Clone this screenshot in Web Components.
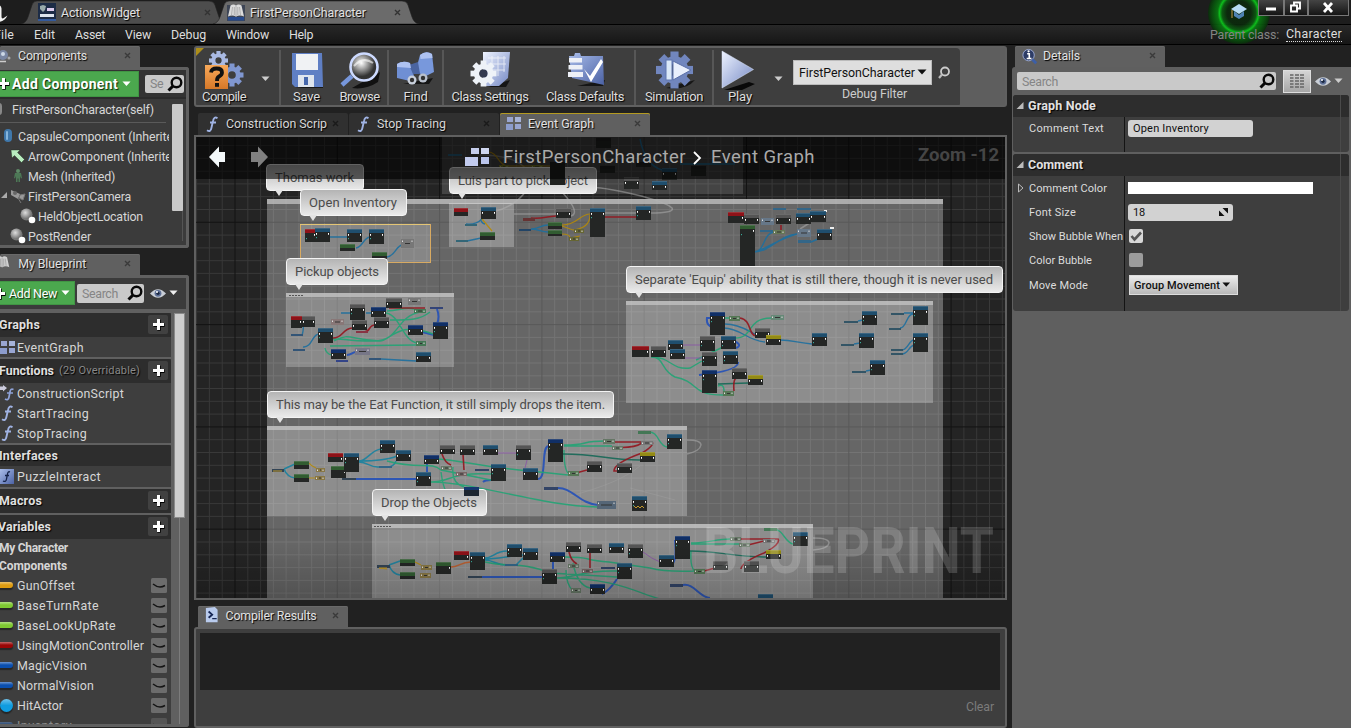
<!DOCTYPE html>
<html lang="en">
<head>
<meta charset="utf-8">
<title>Blueprint Editor</title>
<style>
html,body{margin:0;height:100%;overflow:hidden;background:#212121}
body{font:12.4px Roboto,"Liberation Sans",sans-serif;color:#dcdcdc}
</style>
</head>
<body>
<blueprint-editor></blueprint-editor>
<script>
const define=(name,css,html,extra)=>customElements.define(name,class extends HTMLElement{
  constructor(){super();this.attachShadow({mode:'open'});}
  connectedCallback(){
    if(this.ready)return;this.ready=true;
    this.shadowRoot.innerHTML='<style>*{box-sizing:border-box}'+css+'</style>'+(typeof html==='function'?html(this):html);
    if(extra)extra(this);
  }
});
const t=(text,w,style='')=>`<ue-label fit="${w}" style="${style}">${text}</ue-label>`;

/* Text run set to a given width by tracking */
define('ue-label',':host{display:inline-block;white-space:nowrap;flex:none}','<slot></slot>',el=>{
  const fit=+el.getAttribute('fit');
  if(fit){const n=el.textContent.length,w=el.getBoundingClientRect().width;
    el.style.letterSpacing=((fit-w)/n).toFixed(3)+'px';}
});

const gear=(cx,cy,r,fill,teeth=8)=>{let s='';for(let i=0;i<teeth;i++)s+=`<rect x="${cx-r*.22}" y="${cy-r}" width="${r*.44}" height="${r*.6}" fill="${fill}" transform="rotate(${i*360/teeth} ${cx} ${cy})"/>`;
  return s+`<circle cx="${cx}" cy="${cy}" r="${r*.54}" fill="none" stroke="${fill}" stroke-width="${r*.42}"/>`;};
const defs=`<defs><linearGradient id="b" x2="1" y2="1"><stop stop-color="#eef3ff"/><stop offset="1" stop-color="#7488c4"/></linearGradient><linearGradient id="c" x2="1" y2="1"><stop stop-color="#a9bdea"/><stop offset="1" stop-color="#4c62a4"/></linearGradient><radialGradient id="s" cx=".4" cy=".35"><stop stop-color="#fff"/><stop offset=".5" stop-color="#999"/><stop offset="1" stop-color="#333"/></radialGradient><linearGradient id="o" y2="1" x2="0"><stop stop-color="#f8a95a"/><stop offset="1" stop-color="#d67828"/></linearGradient></defs>`;
const icons={
 u:[20,24,`<path d="M-6 4Q1 4 1.500 8.500V16.500Q1.500 20 4.500 17.500L7.500 15.500Q4 22.500-3 22V19Q-1 19-2 16V9z" fill="#f2f2f2"/>`],
 widget:[18,18,`<rect width="18" height="18" fill="#1d2c46"/><path d="M2 3l3-1 3 1-1 4-2 2-3-3z" fill="#9aa"/><rect x="9" y="5" width="7" height="3" fill="#dce"/><rect x="2" y="11" width="14" height="3" fill="#dde4ee"/><path d="M0 17h18" stroke="#345a9c" stroke-width="2"/>`],
 book:[18,18,`<path d="M0 2h18v16H0z" fill="#1e2b46" opacity=".6"/><path d="M1 14h16v3.500H1z" fill="#274a8c"/><path d="M3.500 2.500q3-2 5.500 0q2.500-2 5.500 0l2.500 11q-4-2-8 0q-4-2-8 0z" fill="#dcdcdc"/><path d="M9 3v11M5.500 4L4.500 12M7.300 4v8M12.500 4l1 8M10.800 4v8" stroke="#a5a5a5" stroke-width=".8"/>`],
 bookbare:[18,18,`<path d="M3.500 2.500q3-2 5.500 0q2.500-2 5.500 0l2.500 11q-4-2-8 0q-4-2-8 0z" fill="#d0d0d0"/><path d="M9 3v11M5.500 4L4.500 12M7.300 4v8M12.500 4l1 8M10.800 4v8" stroke="#999" stroke-width=".8"/>`],
 bulb:[12,14,`<circle cx="3" cy="6" r="5" fill="#7986a2"/><circle cx="3" cy="5" r="2" fill="#cdd8e6"/><path d="M0 12.500h6" stroke="#ccc" stroke-width="1.500"/><circle cx="9" cy="9" r="1.500" fill="#aaa"/>`],
 plus:[11,11,`<path d="M5.5 0v11M0 5.5h11" stroke="#000" stroke-width="3.4" transform="translate(.6 .8)"/><path d="M5.5 0v11M0 5.5h11" stroke="#fff" stroke-width="3"/>`],
 caret:[10,6,`<path d="M.5 .5h9L5 5.500z" fill="currentColor"/>`],
 search:[16,16,`<circle cx="9.5" cy="6.5" r="4.8" fill="none" stroke="#080808" stroke-width="2.4"/><path d="M6 10l-4.5 4.5" stroke="#080808" stroke-width="3"/>`],
 searchlt:[12,14,`<circle cx="7" cy="5.5" r="4" fill="none" stroke="#ccc" stroke-width="1.8"/><path d="M4 8.5L1 12" stroke="#bbb" stroke-width="2.2"/>`],
 close:[7,7,`<path d="M1 1l5 5M6 1L1 6" stroke="currentColor" stroke-width="1.4"/>`],
 self:[5,14,`<rect x="-8" y="1" width="10" height="12" rx="3" fill="#888"/>`],
 capsule:[10,16,`<rect x="1" y="1" width="8" height="13" rx="4" fill="#3f78ac"/><rect x="3" y="3" width="2" height="9" rx="1" fill="#85b5dc"/>`],
 arrow:[15,14,`<path d="M1 1h9L7.5 3.5l7 7-3 3-7-7L2 9z" fill="#b9eec0" stroke="#1a2a1a" stroke-width=".4"/>`],
 mesh:[12,14,`<circle cx="6" cy="2" r="2" fill="#5d8a66"/><path d="M3 4h6l1 5-1 .5L8 7v6H6.500V9.500h-1V13H4V7L3 9.500 2 9z" fill="#4d7856"/>`],
 camera:[16,14,`<path d="M1 1l9 4-2 5-7-4z" fill="#999"/><circle cx="5" cy="4" r="2" fill="#666"/><path d="M10 6l5-1-2 6-4-2zM8 9l3 5" fill="#999" stroke="#777"/>`],
 sphere:[16,16,`<circle cx="6.5" cy="6.5" r="6" fill="url(#s)"/><circle cx="6.5" cy="6.5" r="6" fill="#bbb" opacity=".5"/><circle cx="12" cy="12" r="3.3" fill="#fff"/>`],
 eye:[18,13,`<path d="M1 6.5Q9-2 17 6.5Q9 15 1 6.5z" fill="#c9ced6"/><circle cx="9" cy="6.300" r="3.400" fill="#5d6f96"/><circle cx="9" cy="6.300" r="1.600" fill="#1a2740"/><circle cx="8" cy="5" r="1" fill="#fff"/>`],
 graph:[16,13,`<rect x="1" y="0" width="6" height="5" fill="#99a5cf"/><rect x="9" y="0" width="6" height="5" fill="#a6b3d8"/><rect x="0" y="7" width="7" height="6" fill="#8c9ccc"/><rect x="9" y="7" width="6" height="5" fill="#99a6d2"/>`],
 func:[14,16,`<path d="M12.5 2.2Q9 0 8 5L6.4 12Q5.6 16.5 2 14.2M5 6.5h6" fill="none" stroke="#9fb2e2" stroke-width="1.9"/>`],
 cfunc:[16,16,`<path d="M0 1.500h3V0l4 3-4 3.500V5H0z" fill="#ccd"/><path d="M13.5 4.5Q10.5 3 10 7L9 12Q8.4 16 5 14M7 8h6" fill="none" stroke="#8fa3d8" stroke-width="1.7"/>`],
 iface:[14,16,`<path d="M0 0h14v15H0z" fill="url(#c)"/><path d="M10 3Q8 2 7.5 5L6.5 10Q6 13.5 3 12M5 6.5h4" fill="none" stroke="#142248" stroke-width="1.3"/>`],
 info:[18,18,`<circle cx="8" cy="7.5" r="6" fill="#2d3c66" stroke="#9cabd4"/><path d="M12 12l4 4" stroke="#3c5fa8" stroke-width="3"/><path d="M6.5 6h2.2v5M6 11h5" stroke="#fff" stroke-width="1.7" fill="none"/><circle cx="8" cy="3.5" r="1.2" fill="#fff"/>`],
 ps:[15,18,`<path d="M1 1l10-1 3 3v14H1z" fill="#b9cbed"/><path d="M4 5l4 3.5L4 12" fill="none" stroke="#162654" stroke-width="2"/><path d="M8 13h5" stroke="#162654" stroke-width="1.5"/>`],
 compile:[44,42,gear(16.5,10.5,9.5,'#a9b9e2')+gear(30,25,11.5,'#8097d0')+`<rect x="3" y="15" width="23" height="24" fill="url(#o)"/><path d="M9 22.500Q9.500 18.500 14.500 18.500Q20 18.500 20 22.500Q20 25 17 26.500Q15 27.500 15 31" fill="none" stroke="#111" stroke-width="3.800"/><rect x="13" y="33" width="4" height="3.800" fill="#111"/>`],
 save:[40,42,`<path d="M8 38h28v-4z" fill="#181818"/><path d="M5 3h30l1 34H8l-3-3z" fill="#5f7fc4"/><path d="M9 4h22v16H9z" fill="#f0f2f4"/><path d="M11 25h16v12H11z" fill="#dfe5ee"/><path d="M17 27h4v8h-4z" fill="#4768ac"/>`],
 browse:[44,42,`<path d="M14 38q14 2 26-6l2-10z" fill="#111"/><path d="M14 26L4 35" stroke="#7797dc" stroke-width="4.500"/><circle cx="26" cy="17" r="13.500" fill="url(#s)" stroke="#cddaff" stroke-width="2.600"/><path d="M16 16q9-10 19-3" stroke="#fff" stroke-width="2" fill="none" opacity=".6"/>`],
 find:[42,42,`<path d="M8 34h26l4-6z" fill="#151515"/><path d="M2 14q6-4 13-1l4 13-4 5-13-3z" fill="#6f8fd4"/><path d="M21 20L25 5q6-5 12-1l2 18-10 5z" fill="#7898dc"/><path d="M14 15l9-3 2 12h-7z" fill="#4a64a0"/><path d="M2 14q6-4 13-1l1 5-14-1zM25 5q6-5 12-1l.500 4-12 1z" fill="#aec2f2"/><circle cx="17" cy="30" r="4.500" fill="#c9d0dc"/><circle cx="28" cy="28" r="4.500" fill="#b9c0cc"/><circle cx="17" cy="30" r="2.200" fill="#333"/><circle cx="28" cy="28" r="2.200" fill="#333"/>`],
 settings:[44,42,`<path d="M20 37h18l4-7z" fill="#151515"/><path d="M15 2h27l-2 26-9 8H15z" fill="url(#b)"/><path d="M20 8h18M20 14h18M20 20h17M24 6v20M30 6v20M36 6v16" stroke="#fff" opacity=".65"/>`+gear(15.5,23.5,13,'#eef2f8')+`<circle cx="15.500" cy="23.500" r="4" fill="#333a50"/>`],
 defaults:[44,42,`<path d="M14 36h26l2-6z" fill="#151515"/><path d="M6 6h5l1-3h5l1 3h22l1 29-32-7z" fill="url(#c)"/><path d="M6 8h13v4.500H6zM5.500 15h14v4.500h-14zM5 22h15v5H5z" fill="#edf0f7"/><path d="M21 19l6 7L38 9l2 3-12 20z" fill="#fff"/>`],
 sim:[44,42,`<path d="M14 38q20 3 29-8z" fill="#171717"/>`+gear(22.5,20,18.5,'#7186be')+`<rect x="14" y="10" width="6" height="20" fill="#dbe8f8" stroke="#6077af"/><path d="M21 11l18 9-18 10z" fill="#e9effc" stroke="#5b70a8"/>`],
 play:[40,42,`<path d="M4 40h18l13-6-6-2z" fill="#090909"/><path d="M2 1l31.500 18.500L2 38z" fill="url(#b)" stroke="#dce6fb" stroke-width=".5"/>`],
 grid:[14,14,[0,3,6,9,12].map(y=>`<path d="M0 ${y+1}h3.500M5 ${y+1}h4M10 ${y+1}h4" stroke="#666" stroke-width="1.600"/>`).join('')],
 exp:[9,8,`<path d="M3.500 0H9v5.500zM0 2.500V8h5.500z" fill="#111"/>`],
 check:[14,14,`<path d="M2.500 7l3 3.500L12 3.500" fill="none" stroke="#555" stroke-width="2.600"/>`],
 lid:[16,15,`<rect width="16" height="15" rx="1.500" fill="#6c6c6c"/><path d="M2 6q6 5 12 1.500" fill="none" stroke="#151515" stroke-width="1.500"/>`],
 bigarrowL:[16,20,`<path d="M0 10L10-.5V5h6v10h-6v5.500z" fill="#f3f8fa"/>`],
 bigarrowR:[17,20,`<path d="M17 10L7-.5V5H0v10h7v5.500z" fill="#808080"/>`],
 biggraph:[25,18,`<rect x="6" y="0" width="8" height="6" fill="#c5cdeb"/><rect x="16" y="0" width="8" height="6" fill="#cfd6ef"/><rect x="0" y="9" width="13" height="9" fill="#c2cbee"/><rect x="16" y="9" width="8" height="7" fill="#bac5ec"/>`],
 hat:[16,16,`<path d="M0 5l8-5 8 5-8 5z" fill="#b7dcf4"/><path d="M3 7l5 4 5-4v5l-5 3-5-3z" fill="#4f83b4"/><path d="M1 6v8" stroke="#c59a4c"/>`],
 min:[24,15,`<path d="M7 9h10" stroke="#fff" stroke-width="3"/>`],
 max:[22,15,`<path d="M6 5.500h6v6H6zM9 5V2.500h6v6h-3" fill="none" stroke="#fff" stroke-width="1.900"/>`],
 x:[39,15,`<path d="M15 3l8 9M23 3l-8 9" stroke="#fff" stroke-width="2.700"/>`]
};
define('ue-icon',':host{display:block;flex:none}svg{display:block;overflow:visible}',el=>{
  const [w,h,b]=icons[el.getAttribute('name')],k=+el.getAttribute('scale')||1;
  return `<svg width="${w*k}" height="${h*k}" viewBox="0 0 ${w} ${h}">${defs}${b}</svg>`;
});
const ic=(n,s='',k=1)=>`<ue-icon name="${n}" scale="${k}" style="${s}"></ue-icon>`;

define('title-tab',`:host{display:block;height:23px;position:relative;flex:none}
 svg{display:block;position:absolute;inset:0;width:100%;height:100%}
 .row{position:relative;display:flex;align-items:center;height:22px;color:#e2e2e2;text-shadow:1px 1px 1px #000}
 .x{margin-left:auto;color:#333}`,
 el=>{const w=+el.getAttribute('w');return `<svg viewBox="0 0 ${w} 23"><path d="M0 23Q5 22 7 16L11 4Q12 0 16 0H${w-17}Q${w-12} 0 ${w-11} 4L${w-7} 16Q${w-5} 22 ${w} 23z" fill="${el.getAttribute('fill')}" stroke="#222" stroke-width=".6"/></svg><div class="row"><slot></slot><ue-icon class="x" name="close"></ue-icon></div>`;});

define('title-bar',`:host{display:flex;align-items:flex-end;height:25px;background:#1d1d1d;overflow:visible;position:relative;border-bottom:1px solid #000}
 .win{margin-left:auto;align-self:flex-start;display:flex;margin-right:2px;position:relative;z-index:4}
 .win ue-icon{border:1px solid #777;border-top:0;background:linear-gradient(#444,#151515);margin-left:0}
 .badge{position:absolute;left:1208px;top:-18px;width:62px;height:62px;border-radius:50%;background:radial-gradient(circle,#0b2a0c 0 12px,#0a5f10 17px,#0ccf1c 19.500px,#087a10 21.500px,#08500c 27px,#0a2c0b 31px);z-index:2;opacity:.9;clip-path:inset(18px 0 0 0)}
 .hat{position:absolute;left:1231px;top:4px;z-index:3}`,
 `${ic('u','align-self:center')}<title-tab w="205" fill="#4d4d4d" style="width:205px;margin-left:1px"><ue-icon name="widget" style="margin-left:17px"></ue-icon>${t('ActionsWidget',79,'margin-left:5px')}</title-tab>
 <title-tab w="206" fill="#6b6b6b" style="width:206px;margin-left:-13px"><ue-icon name="book" style="margin-left:14px"></ue-icon>${t('FirstPersonCharacter',116,'margin-left:5px')}</title-tab>
 <div class="badge"></div><ue-icon class="hat" name="hat"></ue-icon><div class="win">${ic('min')}${ic('max')}${ic('x')}</div>`,
 el=>{const tabs=el.shadowRoot.querySelectorAll('title-tab');
  tabs[0].shadowRoot.querySelector('.x').style.marginRight='15px';
  tabs[1].shadowRoot.querySelector('.x').style.marginRight='18px';});

define('menu-bar',`:host{display:flex;align-items:center;height:20px;box-sizing:border-box;gap:20px;background:linear-gradient(#282828,#161616);border-bottom:1px solid #000;color:#ddd}
 .p{margin-left:auto;margin-right:9px;display:flex;gap:7px;position:relative;z-index:4}`,
 t('File',20,'margin-left:-6px')+t('Edit',21)+t('Asset',30)+t('View',26)+t('Debug',35)+t('Window',43)+t('Help',24)+
 `<div class="p">${t('Parent class:',69,'color:#848484')}${t('Character',56,'border-bottom:1px dotted #ddd;line-height:14px')}</div>`);

define('dock-tab',`:host{display:flex;align-items:center;height:22px;flex:none;background:#606060;border-radius:2px 2px 0 0;color:#e2e2e2;text-shadow:1px 1px 1px #000;padding-right:9px;padding-bottom:3px;overflow:hidden;box-shadow:inset 0 1px 0 #696969;box-sizing:border-box}
 :host([dim]){background:#303030;box-shadow:none;color:#d6d6d6;padding-bottom:1px}
 :host([hot]){box-shadow:inset 0 1px 0 #b49a20;padding-bottom:1px}
 .x{margin-left:auto;color:#3a3a3a}:host([dim]) .x{color:#1a1a1a}`,
 '<slot></slot><ue-icon class="x" name="close"></ue-icon>');

define('search-box',':host{display:flex;align-items:center;background:#c9c9c9;border-radius:2px;height:18px;color:#858585;padding:0 1px 0 5px;flex:none;box-sizing:border-box}ue-icon{margin-left:auto}',
 '<slot></slot><ue-icon name="search"></ue-icon>');
define('green-button',':host{display:flex;align-items:center;flex:none;background:#4ba84e;border:1px solid #409544;border-left:0;color:#fff;text-shadow:1px 1px 1px #0b2a0c;box-sizing:border-box}','<slot></slot>');

define('tree-row',':host{display:flex;align-items:center;height:20px;box-sizing:border-box;overflow:hidden;color:#d6d6d6;flex:none}.i{display:flex;justify-content:center;flex:none}',
 el=>`<div class="i">${ic(el.getAttribute('icon'))}</div><slot></slot>`);
const tr=(icon,x,gap,text,w)=>`<tree-row icon="${icon}" style="padding-left:${x}px">${t(text,w,`margin-left:${gap}px`)}</tree-row>`;

define('components-panel',`:host{display:flex;flex-direction:column;height:202px;width:189px;overflow:hidden}
 .f{height:181px;background:#3b3b3b;border:solid #606060;border-width:3px 3px 3px 0;border-radius:0 3px 3px 0;display:flex;flex-direction:column;margin-top:-1px}
 .bar{height:32px;display:flex;align-items:center;gap:6px;background:#333;border-bottom:2px solid #2c2c2c}
 .l{display:flex;height:146px}.rows{width:169px;overflow:hidden}
 .sep{height:1px;background:#5a5a5a;margin:3px 3px 3px 0}
 .sb{width:11px;margin:5px 0 0 3px;border-right:1px solid #555;height:137px}.sb i{display:block;height:107px;background:#c9c9c9;width:11px;border-radius:1px}
 .cam{position:relative}.cam:before{content:"";position:absolute;left:1px;top:6px;border:solid transparent;border-right-color:#aaa;border-bottom-color:#aaa;z-index:1;border-width:3.500px}`,
 `<dock-tab style="width:140px">${ic('bulb')}${t('Components',69,'margin-left:6px')}</dock-tab>
 <div class="f"><div class="bar"><green-button style="width:139px;height:26px;font-size:14px;font-weight:700">${ic('plus','margin-left:-2px')}${t('Add Component',106,'margin-left:3px')}${ic('caret','margin-left:4px',.9)}</green-button><search-box style="width:39px">${t('Se',13)}</search-box></div>
 <div class="l"><div class="rows">${tr('self',0,7,'FirstPersonCharacter(self)',142)}<div class="sep"></div>${tr('capsule',3,5,'CapsuleComponent (Inherited)',166)}${tr('arrow',10,3,'ArrowComponent (Inherited)',155)}${tr('mesh',12,4,'Mesh (Inherited)',87)}<div class="cam">${tr('camera',10,2,'FirstPersonCamera',103)}</div>${tr('sphere',20,2,'HeldObjectLocation',105)}${tr('sphere',10,2,'PostRender',63)}</div><div class="sb"><i></i></div></div></div>`);

define('section-head',':host{display:flex;align-items:center;height:24px;padding-bottom:1px;box-sizing:border-box;background:#2d2d2d;font-weight:700;color:#e0e0e0;text-shadow:1px 1px 1px #000;width:171px;border-radius:0 2px 0 0;flex:none}.p{margin-left:auto;width:20px;height:19px;background:#414141;display:grid;place-items:center;margin-right:3px;border-radius:2px}',
 el=>`<slot></slot>${el.hasAttribute('plain')?'':`<div class="p">${ic('plus')}</div>`}`);

define('variable-row',':host{display:flex;align-items:center;height:20px;box-sizing:border-box;color:#d6d6d6;width:171px;flex:none}.pill{width:16px;height:6px;margin-left:-3px;border-radius:3px;background:linear-gradient(#fff6,#0000 50%),var(--c);box-shadow:0 2px 1px #1118;flex:none}:host([ball]) .pill{width:13px;height:13px;margin-left:0;border-radius:50%}ue-icon{margin-left:auto;margin-right:4px}slot{display:block;margin-left:4px}',
 el=>`<div class="pill" style="--c:${el.getAttribute('c')}"></div><slot></slot>${ic('lid')}`);
const vr=(c,n,w,a='')=>`<variable-row c="${c}" ${a}>${t(n,w)}</variable-row>`;

define('blueprint-panel',`:host{display:flex;flex-direction:column;width:189px;margin-top:6px;flex:1;min-height:0}
 .f{flex:1;min-height:0;margin:-1px 0 1px;background:#606060;border:solid #606060;border-width:3px 3px 3px 0;border-radius:0 3px 3px 0;display:flex;flex-direction:column}
 .bar{height:31px;background:#3b3b3b;display:flex;align-items:center;padding-bottom:1px;flex:none;width:186px}
 .l{display:flex;padding-top:4px;flex:1;min-height:0}.rows{width:171px;overflow:hidden}
 .g{background:#3e3e3e;margin-bottom:2px;display:flex;flex-direction:column}
 .sb{width:11px;margin-left:3px;height:100%}.sb i{display:block;height:205px;background:#cecece;border:1px solid #8a8a8a}.sb:after{content:"";display:block;height:calc(100% - 205px);width:1px;background:#7c7c7c;margin-left:5px}
 .cat{height:18px;line-height:18px;font-weight:700;font-size:12px;color:#d6d6d6}`,
 `<dock-tab style="width:140px">${ic('bookbare','margin-left:-6px',.9)}${t('My Blueprint',68,'margin-left:8px')}</dock-tab>
 <div class="f"><div class="bar"><green-button style="width:75px;height:24px;">${ic('plus','margin-left:-6px')}${t('Add New',48,'margin-left:4px')}${ic('caret','margin-left:4px',.9)}</green-button><search-box style="width:67px;height:19px;margin-left:2px">${t('Search',36)}</search-box>${ic('eye','margin-left:5px')}${ic('caret','margin-left:2px;color:#eee',.9)}</div>
 <div class="l"><div class="rows">
 <div class="g"><section-head>${t('Graphs',41,'margin-left:-1px')}</section-head>${tr('graph',0,1,'EventGraph',67)}</div>
 <div class="g"><section-head>${t('Functions',55,'margin-left:-1px')}${t('(29 Overridable)',81,'margin-left:5px;font-weight:400;font-size:11px;color:#888')}</section-head>${tr('cfunc',0,1,'ConstructionScript',107)}${tr('func',0,3,'StartTracing',72)}${tr('func',0,3,'StopTracing',70)}</div>
 <div class="g"><section-head plain style="height:21px">${t('Interfaces',59,'margin-left:-1px')}</section-head><tree-row icon="iface" style="height:21px">${t('PuzzleInteract',84,'margin-left:3px')}</tree-row></div>
 <div class="g"><section-head>${t('Macros',43,'margin-left:-1px')}</section-head></div>
 <div class="g"><section-head>${t('Variables',53,'margin-left:-2px')}</section-head><div class="cat">${t('My Character',69,'margin-left:-1px')}</div><div class="cat">${t('Components',68,'margin-left:-1px')}</div>
 ${vr('#dd9b10','GunOffset',58)}${vr('#7ec832','BaseTurnRate',82)}${vr('#7ec832','BaseLookUpRate',99)}${vr('#9a0606','UsingMotionController',127)}${vr('#0b4fae','MagicVision',70)}${vr('#0b4fae','NormalVision',77)}${vr('#109cdf','HitActor',46,'ball')}${vr('#0b4fae','Inventory',55,'style="opacity:.5"')}</div>
 </div><div class="sb"><i></i></div></div></div>`);

define('tool-button',':host{display:flex;flex-direction:column;align-items:center;flex:none;color:#ddd;text-shadow:1px 1px 1px #000;font-size:13px}ue-icon{height:42px}slot{display:block;margin-top:-3px}',
 el=>`${ic(el.getAttribute('icon'))}<slot></slot>`);
const tb=(i,n,w,full)=>`<tool-button icon="${i}" style="width:${full}px">${t(n,w)}</tool-button>`;
define('blueprint-toolbar',`:host{display:flex;height:63px;border:solid #606060;border-width:2px;background:#5e5e5e;border-radius:3px;width:813px;position:relative;overflow:hidden;box-sizing:border-box}
 .in{width:764px;height:59px;background:#3e3e3e;display:flex;padding-top:2px;border-radius:0 4px 4px 0}
 .s{width:2px;background:#575757;height:56px;flex:none}
 .d{display:flex;flex-direction:column;align-items:flex-start;width:165px;margin-left:10px;padding-top:10px}.r{display:flex;align-items:center;gap:6px}
 .combo{width:139px;height:25px;background:#dedede;border:1px solid #bbb;color:#111;display:flex;align-items:center;padding-left:5px;gap:2px;padding-bottom:1px}
 .k{position:absolute;left:0;top:0;border:4px solid;border-color:#ad8e19 transparent transparent #ad8e19}`,
 `<div class="k"></div><div class="in">${tb('compile','Compile',44,56)}${ic('caret','align-self:center;margin:0 9px 0 9px;color:#ccc',.9)}<div class="s" ></div>${tb('save','Save',27,51)}${tb('browse','Browse',40,55)}<div class="s"></div>${tb('find','Find',24,53)}<div class="s"></div>${tb('settings','Class Settings',77,92)}${tb('defaults','Class Defaults',78,98)}<div class="s"></div>${tb('sim','Simulation',58,76)}<div class="s"></div>${tb('play','Play',24,52)}${ic('caret','align-self:center;margin-left:8px;color:#ccc',.9)}
 <div class="d"><div class="r"><div class="combo">${t('FirstPersonCharacter',116)}${ic('caret','color:#111')}</div>${ic('searchlt')}</div>${t('Debug Filter',65,'margin:1px 0 0 49px;color:#ccc')}</div></div>`);

/* Graph data: nodes are [x, y, width, height, kind] in graph-view pixels */
const K={b:'#1f4e6d',d:'#555',r:'#8e1218',g:'#315c31',y:'#938a14',n:'#102f66',t:'#222'};
const nodes=`305,229,11,13,r 315,228,15,14,b 347,229,15,13,b 369,229,15,15,b 340,244,15,7,g 372,252,15,7,g
291,316,11,12,r 302,316,13,11,d 318,328,15,15,b 350,304,15,16,d 371,307,15,10,n 386,298,16,10,d 352,320,15,10,d 374,317,15,11,d 433,322,15,17,n 408,325,15,10,n 331,349,15,10,n 416,352,15,10,b
454,208,14,8,r 481,207,15,12,b 480,232,15,8,g 556,208,15,10,d 548,222,14,7,g 548,230,14,6,g 590,208,15,29,b 636,206,15,14,b
596,137,15,11,t 550,162,15,23,t 600,165,15,8,t 624,177,15,12,d 636,161,15,6,t 662,168,15,12,b 652,181,15,9,b 691,165,15,11,t 513,172,15,8,g
728,212,16,11,r 744,214,15,10,d 740,225,15,41,g 776,214,15,10,d 796,213,15,11,b 810,211,16,11,b 817,229,15,11,b
710,312,15,23,n 755,328,15,10,d 766,335,15,10,y 812,333,15,13,b 632,346,17,11,r 651,346,15,11,d 668,340,15,10,b 670,349,15,10,b 700,336,15,15,d 721,336,15,13,b 702,352,15,14,d 723,351,15,13,b 702,370,15,23,n 732,368,15,11,d 748,375,15,10,y 862,311,15,14,b 859,333,15,15,b 870,360,15,15,b 913,306,15,19,b 913,333,15,19,b
294,461,15,8,g 294,474,15,8,g 331,466,15,12,g 328,453,15,9,r 344,453,15,19,b 380,440,15,13,b 396,450,15,11,b 424,455,15,9,n 440,445,15,9,d 460,445,15,10,d 416,472,15,14,b 483,445,15,10,b 491,464,15,17,b 464,487,15,9,n 516,445,15,15,d 523,468,15,12,b 548,439,15,23,n 587,461,15,11,d 617,463,15,10,d 640,452,15,10,y 667,434,15,15,b 632,496,15,15,b
400,559,15,7,g 400,572,15,7,g 436,562,15,12,g 454,551,15,9,r 470,552,15,18,b 507,544,15,13,b 523,548,15,12,b 550,552,15,10,n 566,542,15,10,d 587,544,15,9,d 609,543,15,10,b 628,544,15,14,d 542,569,15,15,d 617,563,15,16,b 590,584,15,10,n 659,555,15,12,b 675,536,15,23,n 713,561,15,9,d 744,561,15,11,d 766,550,15,9,y 793,532,15,14,b 758,594,15,5,b`;
/* Small translucent reroute/getter nodes */
const small=`401,239,13,9,#777 291,334,12,2,#357 293,349,12,2,#357 408,298,13,7,#777 331,319,13,6,#877 356,331,12,2,#834 414,309,12,4,#475 430,307,13,2,#347 416,341,10,5,#475 355,348,15,7,#778 336,360,12,2,#348 369,358,12,2,#357
465,224,12,2,#367 456,240,12,2,#367 523,218,12,3,#633 519,229,12,2,#246 574,229,10,4,#663 569,237,10,4,#663 499,165,10,4,#772 531,165,12,4,#772 481,167,12,3,#552 761,218,13,7,#678 773,208,13,2,#368 797,208,14,2,#368 760,230,14,2,#368 773,230,12,4,#675 797,229,14,8,#678 798,240,13,3,#368 824,210,3,2,#eee 830,227,4,2,#eee
729,316,11,5,#575 771,315,13,5,#687 723,391,11,5,#575 844,321,14,2,#356 841,344,13,2,#356 852,371,14,2,#356 891,313,13,2,#356 889,328,12,2,#356 891,349,12,2,#356 891,353,12,2,#356
272,469,12,3,#345 316,468,9,4,#874 315,476,10,4,#874 342,478,14,2,#345 379,466,13,2,#368 441,466,11,4,#676 456,472,11,4,#766 475,469,14,2,#346 444,490,10,4,#797 568,471,11,5,#575 638,431,13,3,#475 603,439,12,5,#676 612,446,11,4,#676 641,441,12,4,#777 544,487,14,3,#346 597,501,19,8,#567
377,565,13,3,#345 421,565,11,5,#874 420,573,11,5,#874 468,576,14,2,#345 505,564,13,2,#368 568,564,11,4,#676 582,569,11,4,#766 601,567,14,2,#346 571,588,10,5,#676 694,569,11,5,#575 764,528,13,3,#475 730,537,11,4,#676 739,543,11,4,#676 763,539,12,4,#777 670,584,13,3,#346`;
const wires=[
['#1d6f9e',1.4,'M330 237H347M356 248C363 247 363 238 370 237M387 257C395 256 396 246 402 245M303 347C312 348 312 334 319 334M302 336Q304 328 303 326M341 313H350M366 313H371M381 359L416 361M485 224Q481 223 481 219M466 224Q476 225 482 219M467 241L481 238M531 229C540 229 540 225 548 225M531 229C540 229 540 232 548 232M448 155H462M735 164H680M640 139Q645 165 662 170M754 252C765 252 763 233 774 232M754 252C770 252 780 235 797 234M754 252C765 250 780 238 797 234M811 242L818 239M725 324C740 324 750 332 755 334M780 340C793 340 798 343 812 344M724 328C740 328 748 341 765 342M858 321L863 320M854 344L860 343M866 371L871 370M904 313H913M900 328C907 328 906 314 913 314M902 350C908 350 909 340 914 340M902 354C908 354 909 346 914 345'],
['#1782a0',1.5,'M359 461C367 461 371 450 381 449M359 461C369 461 385 461 397 456M359 462C368 462 370 468 379 467H389Q394 466 396 461M284 469L295 464M284 469Q287 477 295 478M389 565L400 561M389 565Q392 574 400 575M485 558C493 558 495 551 507 551M485 559C495 559 510 556 523 555M485 560C493 560 497 565 505 565H516L523 558'],
['#2450b8',2,'M356 479H416M482 577H542M437 309Q440 317 437 324M347 355C352 355 352 352 356 352M422 332L434 335M483 482Q485 480 491 480M557 488C572 487 580 504 598 505M538 479C547 479 541 448 548 446M683 585C694 583 700 598 710 598M602 594Q610 590 617 579M672 564Q677 562 675 540M713 318H707Q706 325 712 327M725 363H738Q737 371 699 375M734 341Q743 345 736 348M427 464V472M553 562V569'],
['#22a374',1.4,'M333 339C353 339 340 341 374 341C400 341 395 317 420 312M330 346L416 345M334 341C350 332 350 340 380 341C390 341 398 320 433 334M386 313C400 315 402 340 417 343M325 348Q326 354 332 355M387 311C400 311 404 306 414 309M390 320C410 320 420 320 430 312M651 357C672 357 670 370 690 368L702 361M651 357C665 357 660 370 675 377C700 382 690 395 723 395M725 318H729M735 338C755 338 745 318 772 318M718 386Q724 383 724 391M696 360L723 347M387 461C420 470 430 461 441 470L491 480M438 459C460 460 480 467 530 471L568 475M431 482C450 482 450 472 491 474M431 482C480 483 540 506 598 507M441 472Q443 487 446 491M453 467Q451 483 464 487M564 445C590 445 580 441 605 441M564 446H612M564 450Q564 473 570 474M648 432C659 431 658 446 667 447M485 562C510 568 520 561 550 573L617 577M565 557C595 557 580 560 609 562L650 568Q665 572 694 571M557 578C575 578 580 570 617 571M557 578C620 578 640 595 664 600M566 570Q566 584 573 591M573 563Q577 585 590 588M691 543C708 543 716 539 730 539M691 544H740M691 551Q690 568 695 571M773 529C784 529 784 542 793 544'],
['#156856',1.4,'M563 454C600 454 605 460 640 460M690 551C720 551 733 557 766 557M718 384L748 383'],
['#93151e',1.6,'M333 338C343 338 342 329 352 328M364 332C371 332 368 325 375 325M389 308H425M531 218C542 219 544 217 556 216M605 217H636M740 318C752 320 748 335 756 336M734 391Q733 380 736 378M442 454Q445 463 451 465M463 454L464 470M604 442H652Q655 445 642 453Q614 463 614 471L621 471M612 447Q633 449 642 443M576 473L587 470M569 552Q571 561 577 564M590 552V568M732 539H778Q781 544 764 553Q742 562 741 569M748 545L768 540M704 571L715 568M781 225V232'],
['#b58a08',1.2,'M482 219L492 231M562 225C577 225 580 214 590 214M562 226L573 230Q590 228 590 215M562 234Q570 234 570 238L580 236M488 152C498 152 498 165 507 166H550M309 463Q311 466 316 468M309 478H315M331 468Q336 469 336 472M379 568L387 569M415 562L421 565'],
['#be5b28',1.4,'M451 567C459 567 460 562 471 562'],
['#8a58a5',1,'M683 345H700M685 358H703M497 453H516M527 460L525 468M643 552Q652 559 660 562']
];
const wh='M480 155C560 155 530 213 480 213M514 214H556M571 216Q581 213 562 192M605 213H650Q675 213 672 208C664 200 610 187 585 187M687 440Q701 440 701 445Q700 451 687 454M813 538Q829 538 829 543Q828 549 813 550M811 222L800 229';
const nodeSvg=(()=>{let s='';
 for(const [c,w,d] of wires)s+=`<path d="${d}" fill="none" stroke="${c}" stroke-width="${w}" stroke-opacity=".9"/>`;
 for(const r of small.split(/\s+/)){const [x,y,w,h,c]=r.split(',');s+=`<rect x="${x}" y="${y}" width="${w}" height="${h}" fill="${c}"/>`;
  if(+h>3)s+=`<path d="M${+x+1.5} ${+y+1.5}v1.500M${+x+ +w-2} ${+y+1.5}v1.500" stroke="#ddd"/><path d="M${+x+4} ${+y+ +h/2}h${w-8}" stroke="#333"/>`;}
 for(const r of nodes.split(/\s+/)){const [x,y,w,h,c]=r.split(',').map((v,i)=>i<4?+v:v);
  s+=`<rect x="${x}" y="${y}" width="${w}" height="${h}" fill="#242625"/><rect x="${x}" y="${y}" width="${w}" height="4" fill="${K[c]}"/><rect x="${x}" y="${y}" width="${w}" height="1" fill="#fff2"/>`;
  if(c!=='t'&&h>8){s+=`<path d="M${x+w-1.5} ${y+5}v1.800" stroke="#fff"/>`;if(c!=='r'&&c!=='g')s+=`<path d="M${x+1.5} ${y+5}v1.800" stroke="#fff"/>`;
   if(h>12)s+=`<path d="M${x+1.5} ${y+9}v1.200" stroke="#37a99a"/>`;}}
 return s+`<path d="M634 506l2 2 2-2 2 2 2-2 2 2M273 471h9M379 568h8" fill="none" stroke="#c59a2c"/>`;})();
const box=(x,y,w,h,op,hd=4,head='#c4c4c4')=>`<rect x="${x}" y="${y}" width="${w}" height="${h}" fill="#fff" fill-opacity="${op}"/><rect x="${x}" y="${y}" width="${w}" height="${hd}" fill="${head}" fill-opacity=".75"/>`;
const grid=(()=>{let f='',m='';const s=102.3/8;
 for(let i=-8;i<64;i++){const x=235+i*s;if(x>195&&x<1005)(i%8?f+=`M${x.toFixed(1)} 137V598`:m+=`M${x.toFixed(1)} 137V598`);}
 for(let i=-8;i<32;i++){const y=222.3+i*s;if(y>136&&y<599)(i%8?f+=`M196 ${y.toFixed(1)}H1005`:m+=`M196 ${y.toFixed(1)}H1005`);}
 return `<path d="${f}" stroke="#393939" fill="none"/><path d="${m}" stroke="#131313" fill="none"/>`;})();

define('comment-bubble',`:host{position:absolute;display:flex;align-items:center;height:27px;padding-left:8px;border:1px solid #f4f4f4;border-radius:4px;background:linear-gradient(#b4b4b4,#eaeaea);color:#4b4b4b;font-size:13px;box-sizing:border-box;padding-bottom:1px}
 .tail{position:absolute;left:8px;top:25px;border:solid transparent;border-width:6px 4px 0;border-top-color:#e4e4e4}`,
 '<slot></slot><div class="tail"></div>');
const bub=(x,y,w,text,tw)=>`<comment-bubble style="left:${x-196}px;top:${y-137}px;width:${w}px">${t(text,tw)}</comment-bubble>`;

define('blueprint-graph',`:host{display:block;width:809px;height:461px;position:relative;overflow:hidden;background:#242424}
 svg{display:block;position:absolute;left:0;top:0}
 .head{position:absolute;inset:0 0 auto 0;height:42px;background:#0009;display:flex;align-items:center;color:#aaa;font-size:18.500px;padding:0 6px 3px 13px}
 .head>*{position:relative}`,
 `<svg width="809" height="462" viewBox="196 137 809 462">${grid}
 ${box(442,130,301,64,.15)}${box(267,199,676,400,.3,5)}${box(449,203,65,44,.27,1)}<rect x="300.500" y="224.500" width="130" height="38" fill="#fff" fill-opacity=".21" stroke="#d8aa62"/><path d="M300 224.500h130" stroke="#e3c575"/>
 ${box(286,293,168,74,.24)}${box(626,301,307,102,.26)}${box(267,426,420,90,.26)}${box(372,524,441,75,.26)}
 <path d="M289 295.500h14M374 526.500h18" stroke="#555" stroke-dasharray="2 1"/>
 <path d="${wh}" fill="none" stroke="#b4b4b4" stroke-opacity=".5" stroke-width="1.500"/><path d="M570 496Q620 483 640 466M630 488L675 500" fill="none" stroke="#aaa" stroke-opacity=".3"/>${nodeSvg}</svg>
 ${bub(266,164,98,'Thomas work',79)}${bub(300,189,107,'Open Inventory',88)}${bub(286,258,102,'Pickup objects',84)}${bub(449,167,148,'Luis part to pick object',130)}${bub(626,266,377,"Separate 'Equip' ability that is still there, though it is never used",358)}${bub(267,391,347,'This may be the Eat Function, it still simply drops the item.',329)}${bub(372,489,115,'Drop the Objects',96)}
 <svg width="809" height="462" viewBox="196 137 809 462"><defs><linearGradient id="q" x2="0" y2="1"><stop offset=".88" stop-color="#000" stop-opacity="0"/><stop offset="1" stop-color="#000" stop-opacity=".2"/></linearGradient></defs><rect x="464" y="487" width="15" height="9" fill="#1c2530"/><rect x="464" y="487" width="15" height="3" fill="#14386f"/><rect x="550" y="162" width="15" height="23" fill="#202220"/><rect x="196" y="137" width="809" height="462" fill="url(#q)"/>
 <text x="703" y="572.500" textLength="291" lengthAdjust="spacingAndGlyphs" font-family="Roboto" font-weight="700" font-size="65" fill="#fff" fill-opacity=".17">BLUEPRINT</text></svg>
 <div class="head">${ic('bigarrowL')}${ic('bigarrowR','margin-left:26px')}${ic('biggraph','margin-left:197px')}${t('FirstPersonCharacter',183,'margin-left:13px')}<svg style="position:relative;margin:2px 9px 0 6px" width="10" height="14"><path d="M2 1l6 6-6 6" fill="none" stroke="#fff" stroke-width="1.800"/></svg>${t('Event Graph',104)}${t('Zoom -12',81,'margin-left:auto;color:#454545;font-weight:700;margin-top:-3px')}</div>`);

define('compiler-results',`:host{display:flex;flex-direction:column;margin-top:6px;height:122px}
 .f{margin-top:-1px;height:101px;border:2px solid #606060;border-radius:3px;background:#3e3e3e;padding:4px 5px 4px 4px;display:flex;flex-direction:column;width:813px}
 .o{height:57px;background:#212121;flex:none}.c{margin:9px 6px 0 auto;color:#7b7b7b}`,
 `<dock-tab style="width:150px;margin-left:4px">${ic('ps','margin-left:7px',.9)}${t('Compiler Results',91,'margin-left:7px')}</dock-tab><div class="f"><div class="o"></div><div class="c">${t('Clear',28)}</div></div>`);

define('property-row',`:host{display:flex;height:24px;align-items:center;flex:none;font-size:11px}
 .n{width:112px;height:100%;display:flex;align-items:center;padding-left:16px;border-right:1px solid #141414;overflow:hidden;position:relative;flex:none}
 .v{padding-left:3px;display:flex;align-items:center}
 .tri{position:absolute;left:4px}`,
 el=>`<div class="n">${el.hasAttribute('exp')?'<svg class="tri" width="8" height="10"><path d="M1.500 1l4.500 4-4.500 4z" fill="none" stroke="#bbb"/></svg>':''}<slot name="n"></slot></div><div class="v"><slot></slot></div>`);
const pr=(n,w,h,val,a='')=>`<property-row ${a} style="height:${h}px"><ue-label slot="n" fit="${w}">${n}</ue-label>${val}</property-row>`;
define('property-category',':host{display:flex;flex-direction:column;width:336px;background:#3e3e3e;margin-bottom:2px;border-radius:3px;overflow:hidden;flex:none;position:relative}.h{height:22px;padding-bottom:1px;background:#2d2d2d;display:flex;align-items:center;font-weight:700;font-size:12.500px;gap:4px;padding-left:3px;color:#e2e2e2;text-shadow:1px 1px 1px #000}.line{position:absolute;right:8px;top:0;bottom:0;width:1px;background:#4a4a4a}',
 '<div class="h"><svg width="8" height="9"><path d="M7.500 1v7H.5z" fill="#bbb"/></svg><slot name="title"></slot></div><slot></slot><div class="line"></div>');
define('details-panel',`:host{display:flex;flex-direction:column;width:339px;height:100%}
 .f{flex:1;background:#5f5f5f;padding:3px 0 0 1px;margin-top:-1px;display:flex;flex-direction:column;border-radius:3px 0 0 0}
 .bar{display:flex;align-items:center;height:22px;padding-left:4px;margin-bottom:3px;flex:none}
 .g{width:28px;height:23px;margin:0 3px 0 7px;border:1px solid #ddd;background:linear-gradient(#d4d4d4,#a6a6a6);display:grid;place-items:center;flex:none}
 .in{height:17px;background:#d2d2d2;border-radius:3px;color:#111;display:flex;align-items:center;padding:0 5px;justify-content:space-between}
 .ck{width:14px;height:14px;border-radius:2px;background:#d8d8d8;margin-left:1px}
 .combo{width:109px;height:20px;margin-left:1px;background:linear-gradient(#ececec,#b8b8b8);border:1px solid #ddd;color:#111;display:flex;align-items:center;padding-left:4px;gap:2px;font-weight:500}`,
 `<dock-tab style="width:150px;margin-left:3px">${ic('info','margin:2px 0 0 6px',.95)}${t('Details',37,'margin-left:5px')}</dock-tab>
 <div class="f"><div class="bar"><search-box style="width:259px">${t('Search',36)}</search-box><div class="g">${ic('grid')}</div>${ic('eye')}${ic('caret','margin-left:2px;color:#ccc',.9)}</div>
 <property-category><ue-label slot="title" fit="68">Graph Node</ue-label>${pr('Comment Text',75,23,`<div class="in" style="width:125px">${t('Open Inventory',76)}</div>`)}<property-row style="height:12px"></property-row></property-category>
 <property-category><ue-label slot="title" fit="55">Comment</ue-label>${pr('Comment Color',78,24,'<div style="width:185px;height:12px;background:#fff"></div>','exp')}${pr('Font Size',47,24,`<div class="in" style="width:105px">${t('18',12)}${ic('exp')}</div>`)}${pr('Show Bubble When',94,24,`<div class="ck">${ic('check')}</div>`)}${pr('Color Bubble',63,24,'<div class="ck" style="background:#9c9c9c"></div>')}${pr('Move Mode',59,26,`<div class="combo">${t('Group Movement',86)}${ic('caret','color:#111',.85)}</div>`)}<property-row style="height:13px"></property-row></property-category></div>`);

define('blueprint-editor',`:host{display:flex;flex-direction:column;width:1351px;height:728px;overflow:hidden;background:#212121;position:relative}
 .body{display:flex;flex:1;min-height:0;padding-top:1px}
 .left{width:189px;display:flex;flex-direction:column;overflow:hidden}
 .mid{width:813px;margin:0 5px;display:flex;flex-direction:column}
 .tabs{display:flex;gap:1px;margin:6px 0 0 4px}
 .gf{border:2px solid #606060;width:813px;height:465px;flex:none}`,
 `<title-bar></title-bar><menu-bar></menu-bar><div class="body"><div class="left"><components-panel></components-panel><blueprint-panel></blueprint-panel></div>
 <div class="mid"><blueprint-toolbar></blueprint-toolbar><div class="tabs"><dock-tab dim style="width:150px">${ic('func','margin-left:7px')}${t('Construction Scrip',101,'margin-left:7px')}</dock-tab><dock-tab dim style="width:150px">${ic('func','margin-left:7px')}${t('Stop Tracing',69,'margin-left:7px')}</dock-tab><dock-tab hot style="width:150px">${ic('graph','margin-left:6px')}${t('Event Graph',66,'margin-left:6px')}</dock-tab></div><div class="gf"><blueprint-graph></blueprint-graph></div><compiler-results></compiler-results></div>
 <details-panel></details-panel></div>`);
</script>
</body>
</html>
